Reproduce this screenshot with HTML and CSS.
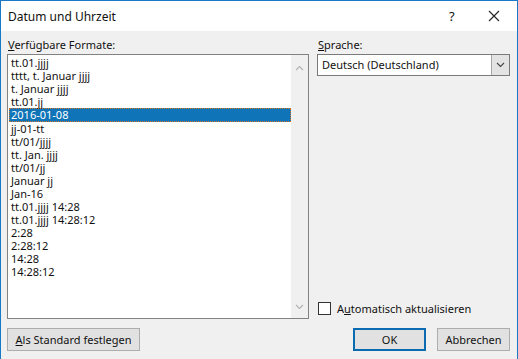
FILE: index.html
```html
<!DOCTYPE html>
<html lang="de">
<head>
  <meta charset="UTF-8" />
  <title>Datum und Uhrzeit</title>
  <link rel="stylesheet" href="styles.css">
</head>
<body>
  <div class="window">
    <!-- Title bar -->
    <div class="titlebar">
      <span class="title">Datum und Uhrzeit</span>
      <span class="help">?</span>
      <span class="close">
        <svg width="12" height="12" viewBox="0 0 12 12">
          <path d="M1 1 L11 11 M11 1 L1 11" stroke="#222" stroke-width="1.1" fill="none"/>
        </svg>
      </span>
    </div>

    <div class="content">
      <div class="left">
        <label class="label"><u>V</u>erfügbare Formate:</label>
        <div class="listbox">
          <ul class="items">
            <li>tt.01.jjjj</li>
            <li>tttt, t. Januar jjjj</li>
            <li>t. Januar jjjj</li>
            <li>tt.01.jj</li>
            <li class="selected">2016-01-08</li>
            <li>jj-01-tt</li>
            <li>tt/01/jjjj</li>
            <li>tt. Jan. jjjj</li>
            <li>tt/01/jj</li>
            <li>Januar jj</li>
            <li>Jan-16</li>
            <li>tt.01.jjjj 14:28</li>
            <li>tt.01.jjjj 14:28:12</li>
            <li>2:28</li>
            <li>2:28:12</li>
            <li>14:28</li>
            <li>14:28:12</li>
          </ul>
          <div class="scrollbar">
            <svg width="9" height="6" viewBox="0 0 9 6">
              <path d="M1 5 L4.5 1.5 L8 5" stroke="#b4b4b4" stroke-width="1.2" fill="none"/>
            </svg>
            <svg width="9" height="6" viewBox="0 0 9 6">
              <path d="M1 1 L4.5 4.5 L8 1" stroke="#b4b4b4" stroke-width="1.2" fill="none"/>
            </svg>
          </div>
        </div>
      </div>

      <div class="right">
        <label class="label"><u>S</u>prache:</label>
        <div class="combo">
          <span class="combo-text">Deutsch (Deutschland)</span>
          <span class="combo-btn">
            <svg width="9" height="6" viewBox="0 0 9 6">
              <path d="M1 1 L4.5 4.5 L8 1" stroke="#444" stroke-width="1.1" fill="none"/>
            </svg>
          </span>
        </div>
        <div class="check-row">
          <span class="checkbox"></span>
          <span>A<u>u</u>tomatisch aktualisieren</span>
        </div>
      </div>
    </div>

    <div class="footer">
      <button class="btn btn-wide"><u>A</u>ls Standard festlegen</button>
      <div class="footer-right">
        <button class="btn btn-default">OK</button>
        <button class="btn">Abbrechen</button>
      </div>
    </div>
  </div>
</body>
</html>
```

FILE: styles.css
```css
body {
  margin: 0;
  padding: 0;
  font-family: "Noto Sans", "Open Sans", sans-serif;
  font-size: 11px;
  color: #111;
  background: #f0f0f0;
}

.window {
  width: 516px;
  height: 358px;
  border: 1px solid #1979c6;
  border-bottom: none;
  background: #f0f0f0;
  display: flex;
  flex-direction: column;
}

/* Title bar */
.titlebar {
  height: 30px;
  background: #fff;
  display: flex;
  align-items: center;
  padding-left: 7px;
}

.title {
  font-size: 12px;
  flex: 1;
}

.help {
  font-size: 13px;
  width: 14px;
  margin-right: 25px;
}

.close {
  display: flex;
  width: 12px;
  margin-right: 17px;
}

/* Main area */
.content {
  display: flex;
  gap: 8px;
  padding: 6px 0 0 6px;
}

.label {
  display: block;
  height: 17px;
  line-height: 16px;
  padding-left: 1px;
}

.left {
  width: 302px;
}

.listbox {
  height: 263px;
  border: 1px solid #828282;
  background: #fff;
  display: flex;
}

.items {
  list-style: none;
  margin: 0;
  padding: 1px 0 0 1px;
  flex: 1;
}

.items li {
  height: 13px;
  line-height: 13px;
  padding-left: 2px;
  white-space: nowrap;
}

.items li.selected {
  background: #0f74b8;
  color: #fff;
  outline: 1px dotted #d5762a;
  outline-offset: -1px;
  height: 14px;
  line-height: 14px;
}

.scrollbar {
  width: 17px;
  background: #f0f0f0;
  display: flex;
  flex-direction: column;
  justify-content: space-between;
  align-items: center;
  padding: 10px 0 8px;
}

.right {
  width: 193px;
  display: flex;
  flex-direction: column;
}

.combo {
  height: 20px;
  border: 1px solid #7a7a7a;
  background: #fff;
  display: flex;
}

.combo-text {
  flex: 1;
  line-height: 20px;
  padding-left: 4px;
}

.combo-btn {
  width: 17px;
  background: #e3e3e3;
  border-left: 1px solid #a8a8a8;
  display: flex;
  align-items: center;
  justify-content: center;
}

.check-row {
  margin-top: auto;
  margin-bottom: 3px;
  display: flex;
  align-items: center;
  gap: 6px;
  padding-left: 1px;
}

.checkbox {
  width: 11px;
  height: 11px;
  border: 1px solid #333;
  background: #fff;
}

/* Buttons */
.footer {
  display: flex;
  justify-content: space-between;
  padding: 9px 7px 0 6px;
}

.footer-right {
  display: flex;
  gap: 11px;
}

.btn {
  font-family: inherit;
  font-size: 11px;
  color: #111;
  height: 23px;
  background: #e1e1e1;
  border: 1px solid #adadad;
  padding: 0;
  width: 73px;
}

.btn-wide {
  width: 133px;
}

.btn-default {
  border: 2px solid #0a6bb0;
}
```
